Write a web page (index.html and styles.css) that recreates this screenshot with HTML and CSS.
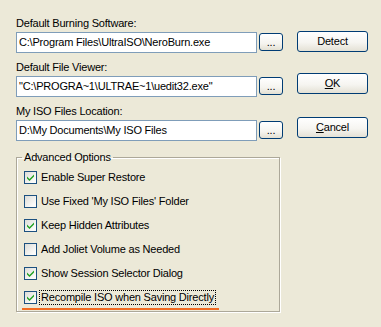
FILE: index.html
```html
<!DOCTYPE html>
<html>
<head>
<meta charset="utf-8">
<link rel="stylesheet" href="styles.css">
</head>
<body>
<div class="dialog">
  <div class="top">
    <div class="paths">
      <div class="field">
        <div class="lbl">Default Burning Software:</div>
        <div class="inrow"><div class="input">C:\Program Files\UltraISO\NeroBurn.exe</div><div class="browse">...</div></div>
      </div>
      <div class="field">
        <div class="lbl">Default File Viewer:</div>
        <div class="inrow"><div class="input">"C:\PROGRA~1\ULTRAE~1\uedit32.exe"</div><div class="browse">...</div></div>
      </div>
      <div class="field">
        <div class="lbl">My ISO Files Location:</div>
        <div class="inrow"><div class="input">D:\My Documents\My ISO Files</div><div class="browse">...</div></div>
      </div>
    </div>
    <div class="actions">
      <div class="btn">Detect</div>
      <div class="btn btn-ok"><u>O</u>K</div>
      <div class="btn btn-cancel"><u>C</u>ancel</div>
    </div>
  </div>
  <fieldset class="group">
    <legend class="legend">Advanced Options</legend>
    <div class="opts">
      <div class="opt"><span class="cb on"><svg viewBox="0 0 7 7" width="7" height="7"><path d="M0 2.5 L2.5 5 L7 0.5 L7 2.5 L2.5 7 L0 4.5 Z" fill="#21a121"/></svg></span><span class="txt">Enable Super Restore</span></div>
      <div class="opt"><span class="cb"></span><span class="txt">Use Fixed 'My ISO Files' Folder</span></div>
      <div class="opt"><span class="cb on"><svg viewBox="0 0 7 7" width="7" height="7"><path d="M0 2.5 L2.5 5 L7 0.5 L7 2.5 L2.5 7 L0 4.5 Z" fill="#21a121"/></svg></span><span class="txt">Keep Hidden Attributes</span></div>
      <div class="opt"><span class="cb"></span><span class="txt">Add Joliet Volume as Needed</span></div>
      <div class="opt"><span class="cb on"><svg viewBox="0 0 7 7" width="7" height="7"><path d="M0 2.5 L2.5 5 L7 0.5 L7 2.5 L2.5 7 L0 4.5 Z" fill="#21a121"/></svg></span><span class="txt">Show Session Selector Dialog</span></div>
      <div class="opt"><span class="cb on"><svg viewBox="0 0 7 7" width="7" height="7"><path d="M0 2.5 L2.5 5 L7 0.5 L7 2.5 L2.5 7 L0 4.5 Z" fill="#21a121"/></svg></span><span class="txt focus">Recompile ISO when Saving Directly</span></div>
    </div>
    <div class="mark"></div>
  </fieldset>
</div>
</body>
</html>
```

FILE: styles.css
```css
html, body {
  margin: 0;
  padding: 0;
  background: #ece9d8;
}
body {
  font-family: "Liberation Sans", Arial, sans-serif;
  font-size: 11px;
  line-height: 13px;
  letter-spacing: -0.2px;
  color: #000;
  width: 381px;
  height: 327px;
  overflow: hidden;
}
.dialog {
  padding: 17px 0 0 16px;
}
.top {
  display: flex;
  gap: 14px;
}
.paths {
  width: 267px;
  display: flex;
  flex-direction: column;
  gap: 8px;
}
.field {
  display: flex;
  flex-direction: column;
  gap: 2px;
}
.lbl {
  height: 13px;
  white-space: nowrap;
}
.inrow {
  display: flex;
  align-items: flex-start;
  gap: 2px;
}
.input {
  box-sizing: border-box;
  width: 241px;
  height: 21px;
  border: 1px solid #7f9db9;
  background: #fff;
  padding: 3px 2px 0 2px;
  white-space: nowrap;
  overflow: hidden;
}
.browse {
  box-sizing: border-box;
  width: 24px;
  height: 18px;
  margin-top: 1px;
  border: 1px solid #003c74;
  border-radius: 3px;
  background: linear-gradient(#ffffff, #f5f4ef 60%, #e3e0d3);
  text-align: center;
  line-height: 17px;
  font-size: 11px;
}
.actions {
  display: flex;
  flex-direction: column;
  margin-top: 14px;
}
.btn {
  box-sizing: border-box;
  width: 71px;
  height: 21px;
  border: 1px solid #003c74;
  border-radius: 3px;
  background: linear-gradient(#ffffff, #f6f5f1 55%, #e4e1d5);
  text-align: center;
  line-height: 18px;
}
.btn-ok { margin-top: 21px; }
.btn-cancel { margin-top: 23px; }
u { text-decoration: underline; text-underline-offset: 1px; }
.group {
  box-sizing: border-box;
  width: 264px;
  margin: 10px 0 0 0;
  padding: 6px 0 1px 5px;
  border: 1px solid #aca899;
  box-shadow: 1px 1px 0 #fff, inset 1px 1px 0 #fff;
  min-inline-size: 0;
}
.legend {
  padding: 0 2px;
  line-height: 13px;
}
.opts {
  display: flex;
  flex-direction: column;
  gap: 9px;
}
.opt {
  display: flex;
  align-items: center;
  height: 15px;
  padding-left: 2px;
  gap: 2px;
}
.cb {
  box-sizing: border-box;
  width: 13px;
  height: 13px;
  border: 1px solid #1c5180;
  background: linear-gradient(135deg, #dcdcd7, #fbfbf9 80%);
  display: flex;
  align-items: center;
  justify-content: center;
  flex: none;
}
.txt {
  border: 1px solid transparent;
  padding: 0 1px;
  white-space: nowrap;
  line-height: 13px;
}
.txt.focus {
  border: 1px dotted #000;
}
.mark {
  width: 197px;
  height: 2px;
  margin-top: 3px;
  background: #f26b22;
}
```
